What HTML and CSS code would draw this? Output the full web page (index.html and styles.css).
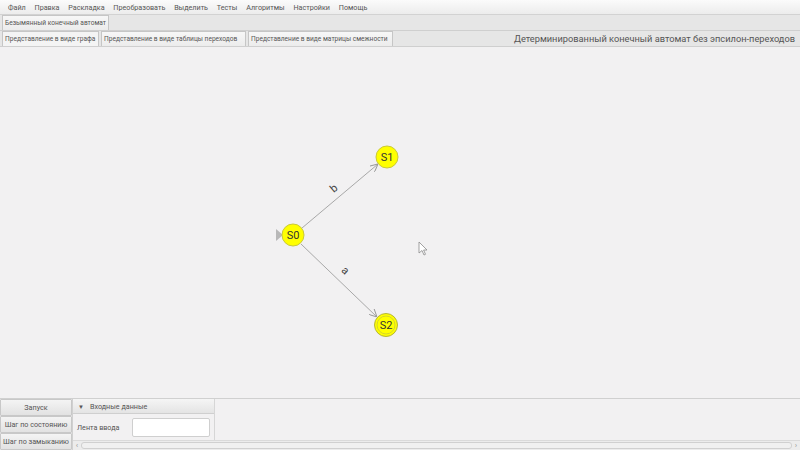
FILE: index.html
```html
<!DOCTYPE html>
<html lang="ru">
<head>
<meta charset="utf-8">
<title>Безымянный конечный автомат</title>
<link rel="stylesheet" href="styles.css">
</head>
<body>
<div class="app">
  <div class="menubar">
    <span class="menu-item">Файл</span>
    <span class="menu-item">Правка</span>
    <span class="menu-item">Раскладка</span>
    <span class="menu-item">Преобразовать</span>
    <span class="menu-item">Выделить</span>
    <span class="menu-item">Тесты</span>
    <span class="menu-item">Алгоритмы</span>
    <span class="menu-item">Настройки</span>
    <span class="menu-item">Помощь</span>
  </div>
  <div class="doc-tabs">
    <div class="tab doc-tab">Безымянный конечный автомат</div>
  </div>
  <div class="view-tabs">
    <div class="tab view-tab selected w1">Представление в виде графа</div>
    <div class="tab view-tab w2">Представление в виде таблицы переходов</div>
    <div class="tab view-tab w3">Представление в виде матрицы смежности</div>
    <div class="view-title">Детерминированный конечный автомат без эпсилон-переходов</div>
  </div>
  <div class="canvas">
    <svg class="graph" width="800" height="350" viewBox="0 48 800 350" xmlns="http://www.w3.org/2000/svg">
      <defs>
        <marker id="arr" viewBox="0 0 10 10" refX="10" refY="5" markerWidth="8" markerHeight="8" orient="auto" markerUnits="userSpaceOnUse">
          <path d="M0,0 L10,5 L0,10" fill="none" stroke="#9a9a9a" stroke-width="1.2"/>
        </marker>
      </defs>
      <line x1="302" y1="229" x2="378" y2="165" stroke="#a8a8a8" stroke-width="1" marker-end="url(#arr)"/>
      <line x1="301" y1="245" x2="377" y2="318" stroke="#a8a8a8" stroke-width="1" marker-end="url(#arr)"/>
      <text class="edge-label" x="0" y="0" transform="translate(336 192) rotate(-40)">b</text>
      <text class="edge-label" x="0" y="0" transform="translate(343 274) rotate(44)">a</text>
      <polygon points="276,230 283,236 276,242" fill="#b8b8b8"/>
      <circle cx="293" cy="236" r="11" fill="#ffff00" stroke="#c9c93a" stroke-width="1"/>
      <text class="node-label" x="293" y="240">S0</text>
      <circle cx="387" cy="158" r="11" fill="#ffff00" stroke="#c9c93a" stroke-width="1"/>
      <text class="node-label" x="387" y="162">S1</text>
      <circle cx="386" cy="326" r="11.5" fill="#ffff00" stroke="#b5b53a" stroke-width="1"/>
      <circle cx="386" cy="326" r="9" fill="none" stroke="#c9c93a" stroke-width="0.8"/>
      <text class="node-label" x="386" y="330">S2</text>
      <path d="M419 243 L419 254 L422 251.5 L424 256 L425.5 255.3 L423.6 251 L427 251 Z" fill="#ffffff" stroke="#8a8a8a" stroke-width="0.8"/>
    </svg>
  </div>
  <div class="bottom">
    <div class="actions">
      <button class="btn">Запуск</button>
      <button class="btn">Шаг по состоянию</button>
      <button class="btn">Шаг по замыканию</button>
    </div>
    <div class="input-area">
      <div class="input-panel">
        <div class="panel-head"><span class="caret">▼</span>Входные данные</div>
        <div class="panel-body">
          <span class="field-label">Лента ввода</span>
          <span class="field"></span>
        </div>
      </div>
      <div class="hscroll">
        <span class="scroll-arrow">‹</span>
        <span class="scroll-track"></span>
        <span class="scroll-arrow">›</span>
      </div>
    </div>
  </div>
</div>
</body>
</html>
```
FILE: styles.css
```css
html, body {
  margin: 0;
  padding: 0;
}
body {
  width: 800px;
  height: 450px;
  overflow: hidden;
  background: #f2f1f2;
  font-family: Roboto, Lato, sans-serif;
  color: #444;
  white-space: nowrap;
}
.app {
  display: flex;
  flex-direction: column;
  height: 450px;
}
.menubar {
  height: 14px;
  display: flex;
  align-items: center;
  padding-left: 3.6px;
  background: linear-gradient(#fbfbfb, #ececec);
  border-bottom: 1px solid #d2d2d2;
  font-size: 7.2px;
  color: #555;
}
.menu-item {
  padding: 0 4.4px;
}
.doc-tabs {
  height: 15px;
  display: flex;
  align-items: flex-end;
  background: #e6e6e6;
  border-bottom: 1px solid #cfcfcf;
  padding-left: 2px;
}
.tab {
  height: 15px;
  display: flex;
  align-items: center;
  padding: 0 2px;
  background: linear-gradient(#f7f7f7, #ececec);
  border: 1px solid #c6c6c6;
  border-bottom: none;
  font-size: 6.6px;
  color: #555;
  box-sizing: border-box;
  overflow: hidden;
}
.doc-tab {
  width: 107px;
  height: 15px;
}
.view-tabs {
  height: 15px;
  display: flex;
  align-items: flex-end;
  gap: 2px;
  padding-left: 2px;
  background: #e6e6e6;
  border-bottom: 1px solid #cfcfcf;
}
.w1 { width: 97px; }
.w2 { width: 145px; }
.w3 { width: 145px; }
.view-tab.selected {
  background: #f4f4f4;
}
.view-title {
  margin-left: auto;
  align-self: center;
  padding-right: 5px;
  font-size: 9.25px;
  color: #555;
}
.canvas {
  flex: 1;
  background: #f2f1f2;
  border-bottom: 1px solid #d0d0d0;
  overflow: hidden;
}
.graph {
  display: block;
}
.node-label {
  font-family: Roboto, Lato, sans-serif;
  font-size: 11px;
  fill: #333;
  text-anchor: middle;
}
.edge-label {
  font-family: Roboto, Lato, sans-serif;
  font-size: 11px;
  fill: #444;
  text-anchor: middle;
}
.bottom {
  height: 51px;
  display: flex;
  background: #f2f1f2;
}
.actions {
  width: 72px;
  display: flex;
  flex-direction: column;
}
.btn {
  height: 17px;
  margin: 0;
  padding: 0;
  font-family: Roboto, Lato, sans-serif;
  font-size: 7.2px;
  color: #555;
  background: linear-gradient(#f4f4f4, #e2e2e2);
  border: 1px solid #c8c8c8;
  border-radius: 1px;
  flex: 1;
  white-space: nowrap;
}
.input-area {
  flex: 1;
  display: flex;
  flex-direction: column;
  border-left: 1px solid #d0d0d0;
}
.input-panel {
  width: 141px;
  flex: 1;
  display: flex;
  flex-direction: column;
  border-right: 1px solid #d6d6d6;
}
.panel-head {
  height: 14px;
  display: flex;
  align-items: center;
  padding-left: 5px;
  background: linear-gradient(#f5f5f5, #e4e4e4);
  border-bottom: 1px solid #cfcfcf;
  font-size: 7.2px;
  color: #555;
}
.caret {
  font-size: 6px;
  margin-right: 6px;
}
.panel-body {
  flex: 1;
  display: flex;
  align-items: center;
  padding-left: 4px;
  font-size: 7.2px;
  color: #555;
}
.field-label {
  width: 55px;
}
.field {
  width: 76px;
  height: 17px;
  background: #fff;
  border: 1px solid #cfcfcf;
  border-radius: 2px;
}
.hscroll {
  height: 9px;
  display: flex;
  align-items: center;
  background: #ececec;
  border-top: 1px solid #dadada;
}
.scroll-arrow {
  width: 8px;
  font-size: 8px;
  line-height: 8px;
  color: #999;
  text-align: center;
}
.scroll-track {
  flex: 1;
  height: 5px;
  border: 1px solid #d0d0d0;
  border-radius: 3px;
  background: #f0f0f0;
}
```
